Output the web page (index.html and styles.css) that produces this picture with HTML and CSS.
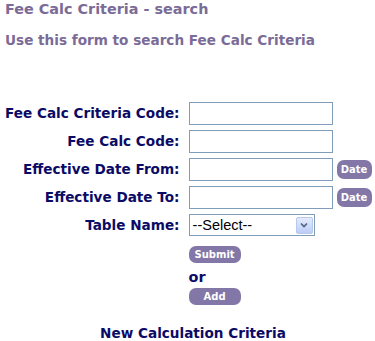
FILE: index.html
```html
<!DOCTYPE html>
<html lang="en">
<head>
    <meta charset="UTF-8">
    <title>Fee Calc Criteria - search</title>
    <link rel="stylesheet" href="styles.css">
</head>
<body>
    <h1 class="page-title">Fee Calc Criteria - search</h1>
    <p class="page-intro">Use this form to search Fee Calc Criteria</p>

    <form class="search-form">
        <table class="form-table">
            <tr>
                <td class="label">Fee Calc Criteria Code:</td>
                <td class="field"><input type="text" class="text-input"></td>
            </tr>
            <tr>
                <td class="label">Fee Calc Code:</td>
                <td class="field"><input type="text" class="text-input"></td>
            </tr>
            <tr>
                <td class="label">Effective Date From:</td>
                <td class="field"><input type="text" class="text-input"><button type="button" class="btn btn-date">Date</button></td>
            </tr>
            <tr>
                <td class="label">Effective Date To:</td>
                <td class="field"><input type="text" class="text-input"><button type="button" class="btn btn-date">Date</button></td>
            </tr>
            <tr>
                <td class="label">Table Name:</td>
                <td class="field">
                    <div class="select-box">
                        <span class="select-text">--Select--</span>
                        <span class="select-arrow">
                            <svg viewBox="0 0 8 6" width="8" height="6"><path d="M1 1.5 L4 4.5 L7 1.5" fill="none" stroke="#4d6185" stroke-width="1.6"/></svg>
                        </span>
                    </div>
                </td>
            </tr>
            <tr>
                <td></td>
                <td class="actions">
                    <button type="submit" class="btn btn-action">Submit</button>
                    <div class="or-text">or</div>
                    <button type="button" class="btn btn-action">Add</button>
                </td>
            </tr>
        </table>
    </form>

    <div class="new-link">New Calculation Criteria</div>
</body>
</html>
```

FILE: styles.css
```css
body {
    margin: 0;
    padding: 0 5px;
    background: #ffffff;
    font-family: "DejaVu Sans", Verdana, sans-serif;
    font-weight: bold;
    font-size: 13.6px;
}

.page-title {
    margin: 0;
    padding-top: 1px;
    font-size: 14.4px;
    line-height: 16px;
    color: #7b6b97;
}

.page-intro {
    margin: 15px 0 0;
    font-size: 13.6px;
    line-height: 16px;
    color: #7b6b97;
}

.search-form {
    margin-top: 51px;
}

.form-table {
    border-collapse: collapse;
}

.form-table td {
    padding: 0;
}

.label {
    width: 175px;
    padding-right: 9px !important;
    text-align: right;
    color: #0b0b66;
    height: 28px;
    white-space: nowrap;
}

.field {
    white-space: nowrap;
}

.text-input {
    box-sizing: border-box;
    width: 144px;
    height: 23px;
    margin: 0;
    border: 1px solid #7f9db9;
    vertical-align: middle;
}

.btn {
    border: 0;
    padding: 0;
    border-radius: 7px;
    background: #8377a8;
    color: #ffffff;
    font-family: "DejaVu Sans", Verdana, sans-serif;
    font-weight: bold;
    font-size: 10px;
    cursor: pointer;
}

.btn-date {
    width: 35px;
    height: 19px;
    margin-left: 4px;
    vertical-align: middle;
}

.select-box {
    box-sizing: border-box;
    width: 126px;
    height: 22px;
    border: 1px solid #7f9db9;
    display: flex;
    align-items: center;
    justify-content: space-between;
    font-family: "Liberation Sans", Arial, sans-serif;
    font-weight: normal;
    font-size: 14.5px;
    color: #000000;
}

.select-text {
    padding-left: 3px;
}

.select-arrow {
    width: 17px;
    height: 17px;
    margin-right: 1px;
    box-sizing: border-box;
    border: 1px solid #b8c9ee;
    border-radius: 2px;
    background: linear-gradient(#e3ebfd, #bccdf6);
    display: flex;
    align-items: center;
    justify-content: center;
}

.actions {
    padding-top: 7px !important;
}

.btn-action {
    display: block;
    width: 52px;
    height: 17px;
}

.or-text {
    color: #0b0b66;
    font-size: 14.4px;
    margin: 7px 0 4px;
    line-height: 14px;
}

.new-link {
    margin-top: 20px;
    padding-left: 11px;
    text-align: center;
    color: #0b0b66;
    font-size: 13.6px;
}
```
